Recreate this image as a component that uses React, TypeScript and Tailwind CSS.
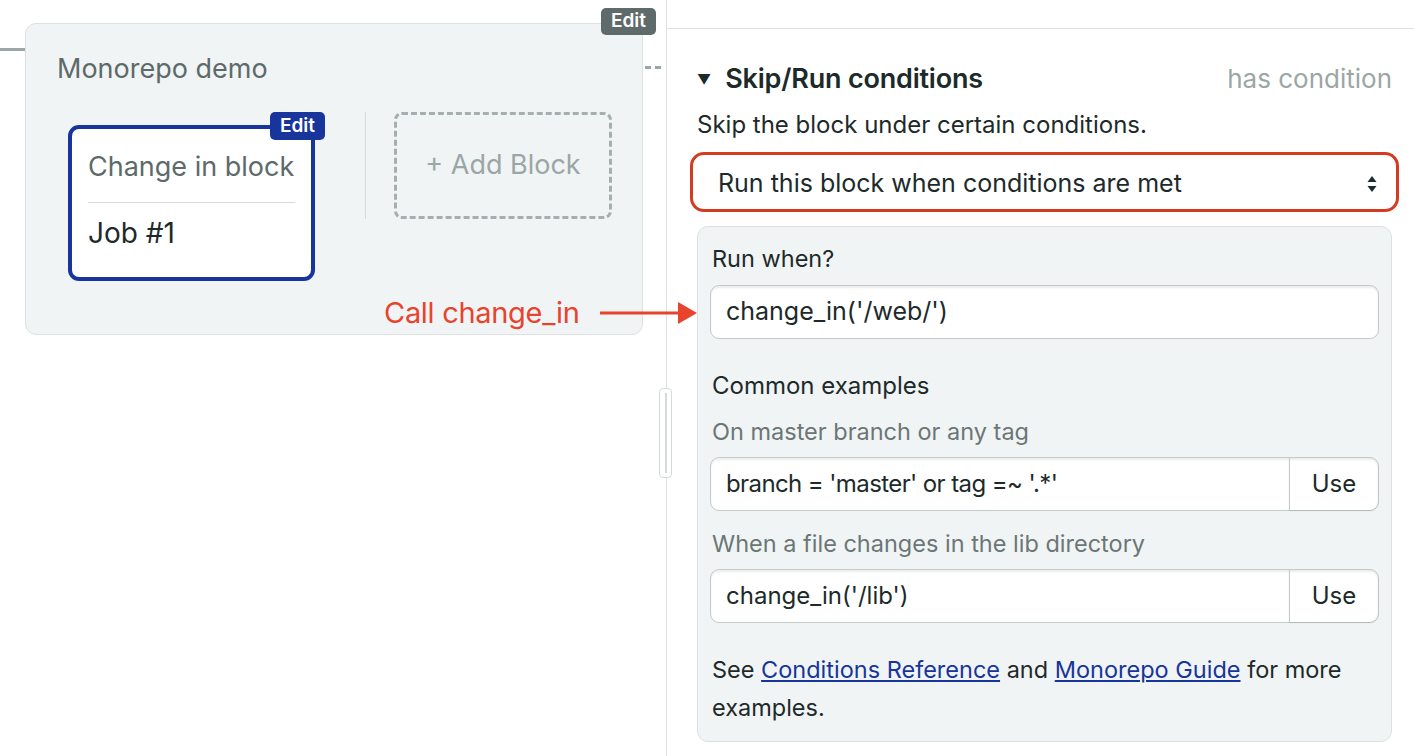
import React from 'react';

const font = { fontFamily: 'Inter, "Noto Sans", sans-serif' };

const SelectArrows: React.FC = () => (
  <svg width="12" height="20" viewBox="0 0 12 20" className="text-[#1f2b2b]">
    <path d="M6 2 L10.5 8 H1.5 Z" fill="currentColor" />
    <path d="M6 18 L10.5 12 H1.5 Z" fill="currentColor" />
  </svg>
);

const ExampleInput: React.FC<{ value: string; tight?: boolean }> = ({ value, tight }) => (
  <div className="mt-[10px] flex h-[54px] rounded-[9px] border border-[#c4c9c9] bg-white shadow-[inset_0_2px_2px_rgba(0,0,0,0.08)]">
    <div className={tight ? 'flex flex-1 items-center pl-[15px] text-[24px] tracking-[-0.6px] text-[#1d2a2a]' : 'flex flex-1 items-center pl-[15px] text-[24px] text-[#1d2a2a]'}>
      {value}
    </div>
    <div className="flex w-[89px] items-center justify-center rounded-r-[9px] border-l border-[#c4c9c9] text-[24px] text-[#1d2a2a] shadow-[0_1px_2px_rgba(0,0,0,0.1)]">
      Use
    </div>
  </div>
);

export default function App() {
  return (
    <div className="relative flex h-[756px] w-[1414px] overflow-hidden bg-white" style={font}>
      {/* left pane: workflow canvas */}
      <div className="relative w-[667px] shrink-0 border-r border-[#dde1e2]">
        <div className="absolute left-0 top-[48px] h-[3px] w-[26px] bg-[#9ba6a6]" />
        <div className="absolute left-[645px] top-[66px] flex h-[3px] gap-[4px]">
          <div className="h-[3px] w-[6px] bg-[#9ba6a6]" />
          <div className="h-[3px] w-[6px] bg-[#9ba6a6]" />
        </div>

        <div className="relative ml-[25px] mt-[23px] h-[312px] w-[618px] rounded-[11px] border border-[#dde1e2] bg-[#f1f4f5] pl-[31px] pt-[29px]">
          <div className="absolute -right-[14px] -top-[16px] flex h-[27px] w-[55px] items-center justify-center rounded-[5px] bg-[#5f6b6b] text-[19px] font-semibold text-white">
            Edit
          </div>
          <div className="text-[27px] leading-[32px] text-[#5d6a6a]">Monorepo demo</div>

          <div className="ml-[11px] mt-[27px] flex items-start">
            <div className="relative mt-[13px] h-[156px] w-[247px] rounded-[11px] border-4 border-[#17359b] bg-white px-4 pt-[22px]">
              <div className="absolute -right-[14px] -top-[17px] flex h-[28px] w-[55px] items-center justify-center rounded-[5px] bg-[#17359b] text-[19px] font-semibold text-white">
                Edit
              </div>
              <div className="border-b border-[#d5dada] pb-[19px] text-[27px] leading-[32px] text-[#5d6a6a]">Change in block</div>
              <div className="pt-[14px] text-[28px] leading-[32px] text-[#1d2a2a]">Job #1</div>
            </div>
            <div className="ml-[50px] h-[107px] w-px bg-[#d5dada]" />
            <div className="ml-[28px] flex h-[107px] w-[218px] items-center justify-center rounded-[8px] border-[3px] border-dashed border-[#a6afaf] text-[27px] text-[#9ba6a6]">
              + Add Block
            </div>
          </div>
        </div>

        {/* resize handle */}
        <div className="absolute left-[659px] top-[388px] flex h-[90px] w-[13px] justify-center rounded-[4px] border border-[#d5dada] bg-white py-[4px]">
          <div className="w-[2px] bg-[#d5dada]" />
        </div>
      </div>

      {/* right pane: block settings */}
      <div className="flex-1">
        <div className="h-[29px] border-b border-[#dde1e2]" />
        <div className="pl-[30px] pr-[22px]">
          <div className="mt-[34px] flex items-center justify-between">
            <div className="flex items-center">
              <span className="mr-[14px] text-[14px] text-[#1d2a2a]">▼</span>
              <span className="text-[27px] font-semibold leading-[32px] tracking-[-0.2px] text-[#1d2a2a]">Skip/Run conditions</span>
            </div>
            <span className="text-[26px] leading-[32px] text-[#9ba6a6]">has condition</span>
          </div>
          <div className="mt-[15px] text-[24px] leading-[30px] text-[#1d2a2a]">Skip the block under certain conditions.</div>

          <div className="-mx-[7px] mt-[12px] rounded-[14px] border-[3px] border-[#d43c22] p-[2px]">
            <div className="flex h-[50px] items-center justify-between rounded-[10px] bg-white pl-[23px] pr-[16px] pt-[3px] text-[25px] text-[#1d2a2a]">
              <span>Run this block when conditions are met</span>
              <SelectArrows />
            </div>
          </div>

          <div className="mt-[14px] rounded-[11px] border border-[#dde1e2] bg-[#f1f4f5] px-[12px] pb-[14px] pt-[17px] text-[#1d2a2a]">
            <div className="ml-[2px] text-[23.5px] leading-[30px]">Run when?</div>
            <div className="mt-[11px] flex h-[54px] items-center rounded-[9px] border border-[#c4c9c9] bg-white pl-[15px] text-[25px] shadow-[inset_0_2px_2px_rgba(0,0,0,0.08)]">
              change_in('/web/')
            </div>

            <div className="ml-[2px] mt-[32px] text-[24px] leading-[30px]">Common examples</div>
            <div className="ml-[2px] mt-[16px] text-[23.5px] leading-[30px] text-[#6b7676]">On master branch or any tag</div>
            <ExampleInput value="branch = 'master' or tag =~ '.*'" tight />
            <div className="ml-[2px] mt-[18px] text-[23.5px] leading-[30px] text-[#6b7676]">When a file changes in the lib directory</div>
            <ExampleInput value="change_in('/lib')" />

            <div className="ml-[2px] mt-[28px] text-[23.5px] leading-[38px]">
              See <a className="text-[#17359b] underline">Conditions Reference</a> and{' '}
              <a className="text-[#17359b] underline">Monorepo Guide</a> for more
              <br />
              examples.
            </div>
          </div>
        </div>
      </div>

      {/* annotation */}
      <div className="absolute left-[384px] top-[297px] text-[29px] leading-[32px] tracking-[-0.3px] text-[#e8432c]">
        Call change_in
      </div>
      <svg className="absolute left-[598px] top-[301px]" width="102" height="24" viewBox="0 0 102 24">
        <line x1="2" y1="12" x2="82" y2="12" stroke="#e8432c" strokeWidth="3" />
        <path d="M80 1 L99 12 L80 23 Z" fill="#e8432c" />
      </svg>
    </div>
  );
}
